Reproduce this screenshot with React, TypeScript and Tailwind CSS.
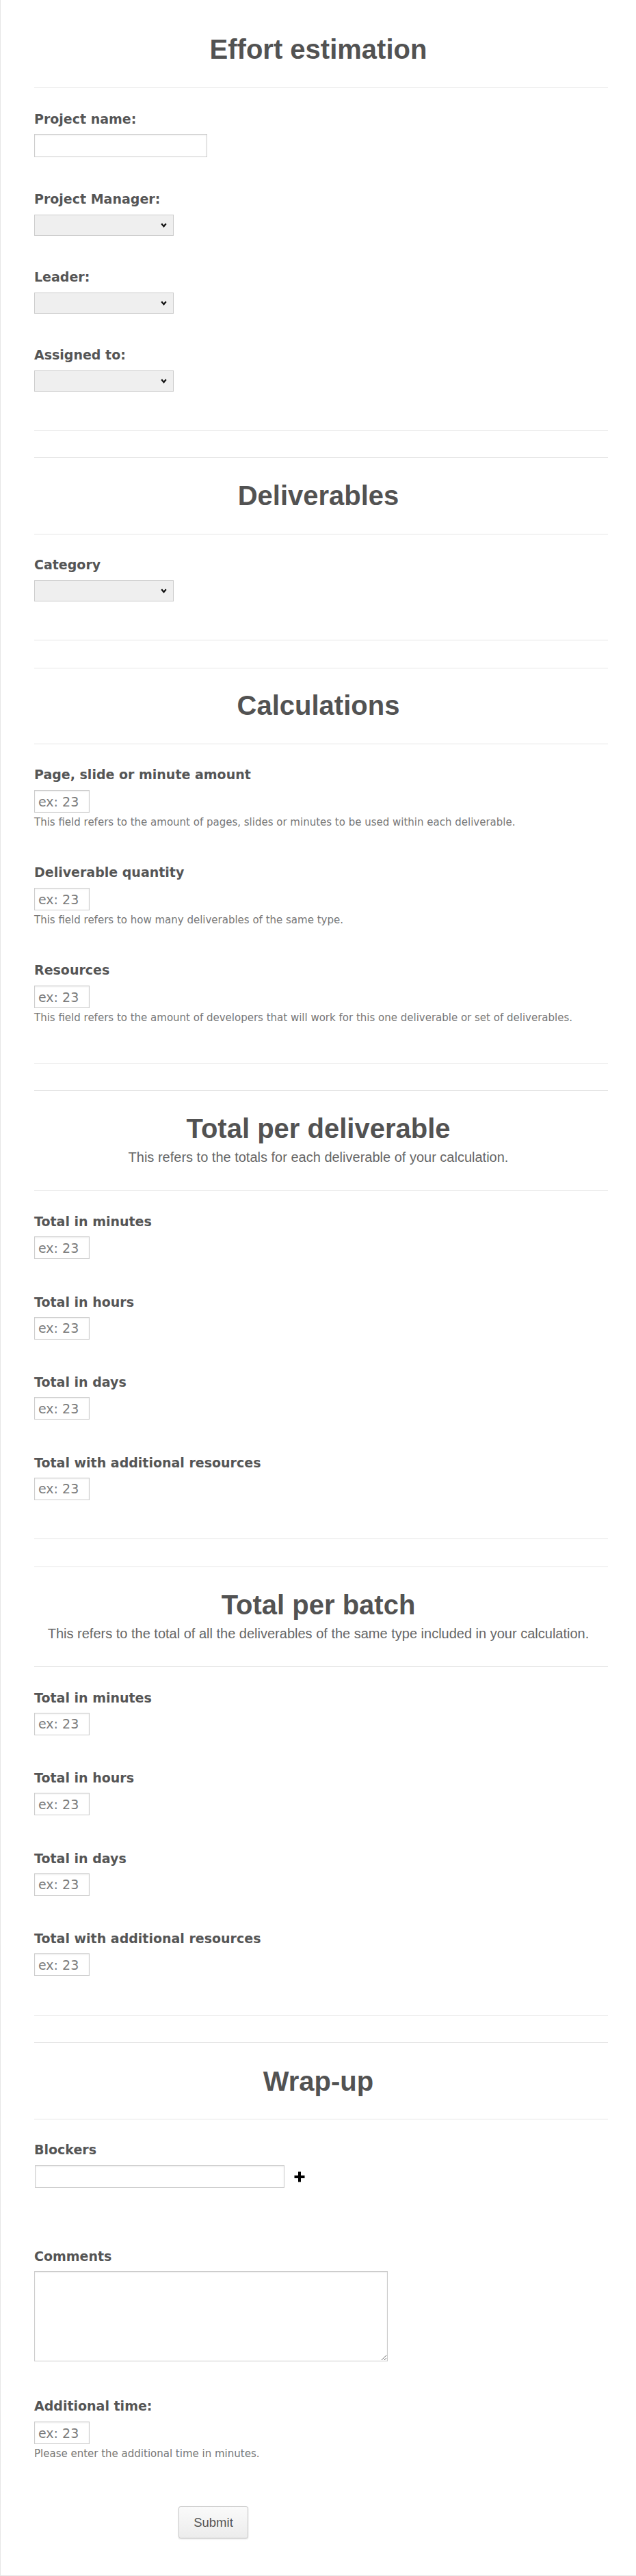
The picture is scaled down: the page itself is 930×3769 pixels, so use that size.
import React from 'react'

type FieldProps = {
  label: string
  help?: string
  className?: string
  children: React.ReactNode
}

const Field = ({ label, help, className, children }: FieldProps) => {
  return (
    <div className={className}>
      <label className="block text-[19px] leading-[22px] font-bold text-[#555]">{label}</label>
      {children}
      {help && <p className="mt-[6px] text-[15px] leading-[17px] text-[#777]">{help}</p>}
    </div>
  )
}

const Heading = ({ title, className }: { title: string; className?: string }) => (
  <h2 className={`pr-[8px] text-center font-['Liberation_Sans',Arial,sans-serif] font-bold text-[40px] leading-[46px] text-[#525252] ${className ?? ''}`}>
    {title}
  </h2>
)

const Sub = ({ text }: { text: string }) => (
  <p className="mt-[8px] pr-[8px] text-center font-['Liberation_Sans',Arial,sans-serif] text-[20px] leading-[23px] text-[#666]">{text}</p>
)

const Rule = ({ className }: { className?: string }) => <hr className={`border-t border-[#e5e5e5] ${className ?? ''}`} />

const NumInput = ({ className }: { className?: string }) => (
  <input
    type="text"
    placeholder="ex: 23"
    className={`block w-[81px] h-[33px] border border-[#ccc] bg-white pl-[5px] text-[19px] text-[#555] placeholder:text-[#7a7a7a] shadow-[inset_0_1px_2px_rgba(0,0,0,0.08)] outline-none ${className ?? ''}`}
  />
)

const Select = ({ className }: { className?: string }) => (
  <div className={`relative w-[204px] h-[31px] ${className ?? ''}`}>
    <select className="appearance-none block w-full h-full border border-[#ccc] bg-[#efefef] outline-none">
      <option></option>
    </select>
    <svg className="absolute right-[10px] top-[12px] pointer-events-none" width="9" height="7" viewBox="0 0 9 7">
      <polyline points="1.2,1.2 4.5,5.2 7.8,1.2" fill="none" stroke="#111" strokeWidth="2.2" />
    </svg>
  </div>
)

const totals = ['Total in minutes', 'Total in hours', 'Total in days', 'Total with additional resources']

const App = () => {
  return (
    <div className="min-h-[3769px] bg-white border-l border-b border-[#e6e6e6] pl-[49px] pr-[41px] pt-[49px] pb-[51px] font-['DejaVu_Sans',Verdana,sans-serif]">
      {/* project */}
      <Heading title="Effort estimation" />
      <Rule className="mt-[33px]" />
      <Field label="Project name:" className="mt-[34px]">
        <input type="text" className="mt-[11px] block w-[253px] h-[34px] border border-[#ccc] bg-white shadow-[inset_0_1px_2px_rgba(0,0,0,0.08)] outline-none" />
      </Field>
      <Field label="Project Manager:" className="mt-[50px]">
        <Select className="mt-[12px]" />
      </Field>
      <Field label="Leader:" className="mt-[49px]">
        <Select className="mt-[12px]" />
      </Field>
      <Field label="Assigned to:" className="mt-[49px]">
        <Select className="mt-[12px]" />
      </Field>
      <Rule className="mt-[56px]" />

      {/* deliverables */}
      <Rule className="mt-[39px]" />
      <Heading title="Deliverables" className="mt-[32px]" />
      <Rule className="mt-[33px]" />
      <Field label="Category" className="mt-[33px]">
        <Select className="mt-[12px]" />
      </Field>
      <Rule className="mt-[56px]" />

      {/* calculations */}
      <Rule className="mt-[40px]" />
      <Heading title="Calculations" className="mt-[31px]" />
      <Rule className="mt-[33px]" />
      <Field label="Page, slide or minute amount" className="mt-[33px]" help="This field refers to the amount of pages, slides or minutes to be used within each deliverable.">
        <NumInput className="mt-[12px]" />
      </Field>
      <Field label="Deliverable quantity" className="mt-[53px]" help="This field refers to how many deliverables of the same type.">
        <NumInput className="mt-[12px]" />
      </Field>
      <Field label="Resources" className="mt-[53px]" help="This field refers to the amount of developers that will work for this one deliverable or set of deliverables.">
        <NumInput className="mt-[12px]" />
      </Field>
      <Rule className="mt-[58px]" />

      {/* per deliverable */}
      <Rule className="mt-[38px]" />
      <Heading title="Total per deliverable" className="mt-[32px]" />
      <Sub text="This refers to the totals for each deliverable of your calculation." />
      <Rule className="mt-[36px]" />
      {totals.map((t, i) => (
        <Field key={t} label={t} className={i === 0 ? 'mt-[34px]' : 'mt-[51.5px]'}>
          <NumInput className="mt-[11px]" />
        </Field>
      ))}
      <Rule className="mt-[56px]" />

      {/* per batch */}
      <Rule className="mt-[40px]" />
      <Heading title="Total per batch" className="mt-[32px]" />
      <Sub text="This refers to the total of all the deliverables of the same type included in your calculation." />
      <Rule className="mt-[36px]" />
      {totals.map((t, i) => (
        <Field key={t} label={t} className={i === 0 ? 'mt-[34px]' : 'mt-[51.5px]'}>
          <NumInput className="mt-[11px]" />
        </Field>
      ))}
      <Rule className="mt-[57px]" />

      {/* wrap-up */}
      <Rule className="mt-[39px]" />
      <Heading title="Wrap-up" className="mt-[33px]" />
      <Rule className="mt-[32px]" />
      <Field label="Blockers" className="mt-[33px]">
        <div className="mt-[12px] flex items-center gap-[14px]">
          <input type="text" className="block w-[365px] h-[33px] ml-[1px] border border-[#ccc] bg-white shadow-[inset_0_1px_2px_rgba(0,0,0,0.08)] outline-none" />
          <svg width="16" height="16" viewBox="0 0 16 16">
            <rect x="6" y="0.5" width="4" height="15" fill="#000" />
            <rect x="0.5" y="6" width="15" height="4" fill="#000" />
          </svg>
        </div>
      </Field>
      <Field label="Comments" className="mt-[89px]">
        <textarea className="mt-[11px] block w-[517px] h-[132px] border border-[#ccc] bg-white shadow-[inset_0_1px_2px_rgba(0,0,0,0.08)] outline-none" />
      </Field>
      <Field label="Additional time:" className="mt-[54px]" help="Please enter the additional time in minutes.">
        <NumInput className="mt-[12px]" />
      </Field>
      <button
        type="submit"
        className="mt-[68px] ml-[211px] block w-[102px] h-[47px] rounded-[3px] border border-[#c8c8c8] bg-gradient-to-b from-[#fafafa] to-[#ececec] shadow-[0_1px_2px_rgba(0,0,0,0.15)] font-['Liberation_Sans',Arial,sans-serif] text-[18.5px] text-[#555]"
      >
        Submit
      </button>
    </div>
  )
}

export default App
